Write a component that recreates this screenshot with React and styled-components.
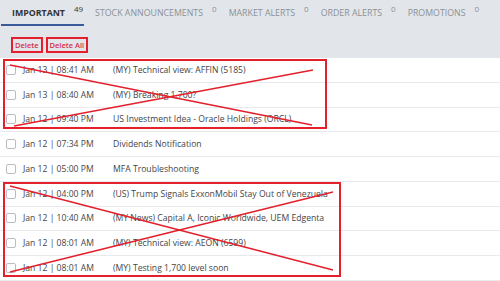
import styled, { createGlobalStyle } from "styled-components";

const Global = createGlobalStyle`
  body {
    margin: 0;
    background: #e2e6ea;
    font-family: "Open Sans", "Liberation Sans", sans-serif;
  }
`;

const Page = styled.div`
  position: relative;
  width: 500px;
  height: 281px;
  overflow: hidden;
  background: #e2e6ea;
`;

const Tabs = styled.div`
  display: flex;
  height: 26px;
  padding-left: 1px;
  box-sizing: border-box;
`;

const Tab = styled.div`
  display: flex;
  align-items: flex-start;
  white-space: nowrap;
  padding: 7px 1px 0 11px;
  font-size: 8.8px;
  color: ${(p) => (p.active ? "#333" : "#8c9096")};
  font-weight: ${(p) => (p.active ? 700 : 400)};
  border-bottom: 2px solid ${(p) => (p.active ? "#3b5a9a" : "transparent")};
`;

const Count = styled.span`
  font-size: 8px;
  margin-left: 9px;
  margin-top: -4px;
  color: ${(p) => (p.active ? "#333" : "#8c9096")};
  font-weight: 400;
`;

const Actions = styled.div`
  display: flex;
  gap: 3px;
  padding: 11px 0 0 11px;
  height: 21px;
`;

const Btn = styled.button`
  font-family: inherit;
  font-size: 7.5px;
  font-weight: 600;
  color: #d9304a;
  background: transparent;
  border: 2px solid #e3202c;
  padding: 0 2px;
  height: 16px;
  line-height: 12px;
`;

const List = styled.div`
  background: #fff;
`;

const Row = styled.div`
  display: flex;
  align-items: center;
  height: 23.75px;
  border-bottom: 1px solid #e8eaed;
  font-size: 8.6px;
  color: #454545;
`;

const Check = styled.span`
  width: 8px;
  height: 8px;
  border: 1px solid #b9bcc0;
  border-radius: 2px;
  margin: 0 7px 0 6px;
  background: #fff;
`;

const DateCell = styled.span`
  width: 90px;
  white-space: nowrap;
`;

const Title = styled.span`
  white-space: nowrap;
  font-size: 8.65px;
`;

const Marker = styled.div`
  position: absolute;
  border: 2px solid #e3202c;
`;

const Cross = styled.svg`
  position: absolute;
  left: 0;
  top: 0;
  pointer-events: none;
`;

const rows = [
  ["Jan 13 | 08:41 AM", "(MY) Technical view: AFFIN (5185)"],
  ["Jan 13 | 08:40 AM", "(MY) Breaking 1,700?"],
  ["Jan 12 | 09:40 PM", "US Investment Idea - Oracle Holdings (ORCL)"],
  ["Jan 12 | 07:34 PM", "Dividends Notification"],
  ["Jan 12 | 05:00 PM", "MFA Troubleshooting"],
  ["Jan 12 | 04:00 PM", "(US) Trump Signals ExxonMobil Stay Out of Venezuela"],
  ["Jan 12 | 10:40 AM", "(MY News) Capital A, Iconic Worldwide, UEM Edgenta"],
  ["Jan 12 | 08:01 AM", "(MY) Technical view: AEON (6599)"],
  ["Jan 12 | 08:01 AM", "(MY) Testing 1,700 level soon"],
];

const tabs = [
  ["IMPORTANT", 49],
  ["STOCK ANNOUNCEMENTS", 0],
  ["MARKET ALERTS", 0],
  ["ORDER ALERTS", 0],
  ["PROMOTIONS", 0],
];

export default function App() {
  return (
    <Page>
      <Global />
      <Tabs>
        {tabs.map(([name, n], i) => (
          <Tab key={name} active={i === 0}>
            {name}
            <Count active={i === 0}>{n}</Count>
          </Tab>
        ))}
      </Tabs>
      <Actions>
        <Btn>Delete</Btn>
        <Btn>Delete All</Btn>
      </Actions>
      <List>
        {rows.map(([d, t], i) => (
          <Row key={i}>
            <Check />
            <DateCell>{d}</DateCell>
            <Title>{t}</Title>
          </Row>
        ))}
      </List>
      <Marker style={{ left: 3, top: 59, width: 320, height: 66 }} />
      <Marker style={{ left: 3, top: 182, width: 334, height: 91 }} />
      <Cross width="500" height="281">
        <g stroke="#e3202c" strokeWidth="1.5">
          <line x1="10" y1="65" x2="312" y2="125" />
          <line x1="14" y1="126" x2="313" y2="70" />
          <line x1="10" y1="186" x2="333" y2="270" />
          <line x1="10" y1="272" x2="333" y2="192" />
        </g>
      </Cross>
    </Page>
  );
}
